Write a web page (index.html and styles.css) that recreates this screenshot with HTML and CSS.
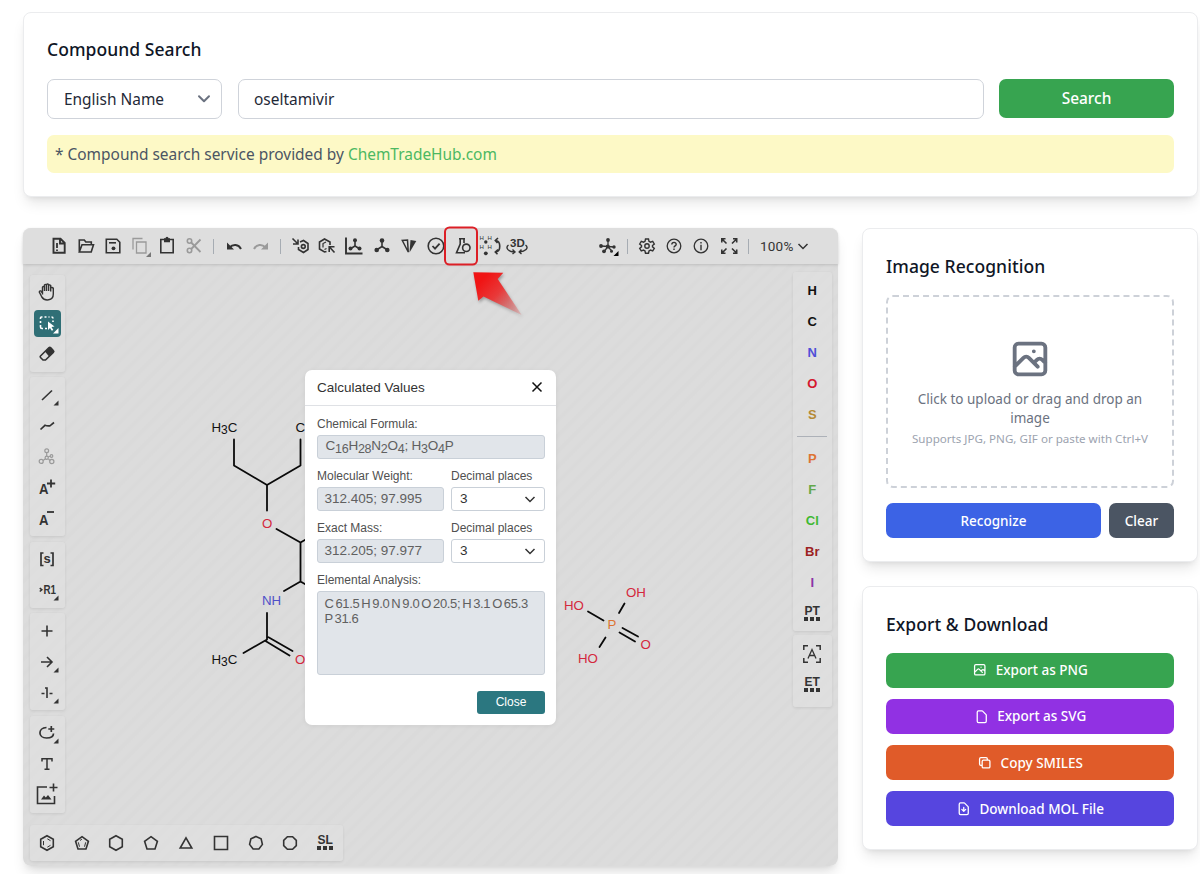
FILE: index.html
```html
<!DOCTYPE html>
<html lang="en">
<head>
<meta charset="utf-8">
<title>Compound Search</title>
<link rel="stylesheet" href="styles.css">
</head>
<body>
<main class="page">
  <section class="card search">
    <h2 class="card-title">Compound Search</h2>
    <div class="search-row">
      <div class="select"><span>English Name</span>
        <svg width="14" height="10" viewBox="0 0 14 10"><path d="M2 2.300 7 7.300 12 2.300" fill="none" stroke="#6b7280" stroke-width="2" stroke-linecap="round" stroke-linejoin="round"/></svg>
      </div>
      <div class="input">oseltamivir</div>
      <button class="btn search-btn">Search</button>
    </div>
    <p class="notice">* Compound search service provided by <a class="link">ChemTradeHub.com</a></p>
  </section>

  <div class="columns">
    <section class="editor">
      <svg class="structure" viewBox="23 228.500 815 637" width="815" height="637">
        <g class="bonds">
          <path d="M234 440V466L267 485.500L300.500 466V440M267 485.500V511M276.500 529.500L300.500 543L330 526M300.500 543V582L330 599M300.500 582L284 591.500M267 613.500V640L243.500 653.500M265.500 641.500L289.500 656M268.500 637.800L292.500 651.500"/>
          <path d="M588 612L603.500 621M619 613.500L624.500 604M605.500 638L599.500 647.500M619.500 633L635 642M622.500 628.500L638 637"/>
        </g>
        <g class="atoms">
          <text x="211.500" y="432">H<tspan dy="2.500" font-size="12">3</tspan><tspan dy="-2.500">C</tspan></text>
          <text x="295.500" y="432">CH</text>
          <text x="211.500" y="664">H<tspan dy="2.500" font-size="12">3</tspan><tspan dy="-2.500">C</tspan></text>
          <text class="nitrogen" x="262" y="605.500">NH</text>
          <text class="oxygen" x="262" y="528.500">O</text>
          <text class="oxygen" x="295" y="664">O</text>
          <text class="oxygen" x="564" y="610.500">HO</text>
          <text class="oxygen" x="626" y="597">OH</text>
          <text class="phosphorus" x="607.500" y="629.500">P</text>
          <text class="oxygen" x="640.500" y="649">O</text>
          <text class="oxygen" x="578" y="663.500">HO</text>
        </g>
      </svg>

      <header class="toolbar">
        <div class="group">
          <svg class="ico" viewBox="0 0 24 24"><path d="M6.500 4.800h7l4.200 4.200v9.700H6.500z M13 5v4.500h4.500" stroke-width="1.900"/><path d="M10 9v5M10 15.500v1.600" stroke-width="1.800"/></svg>
          <svg class="ico" viewBox="0 0 24 24"><path d="M5.300 18V6h5l1.500 2h5.500v2.500M5.300 18l2.700-7.200h11.500L17.200 18z"/></svg>
          <svg class="ico" viewBox="0 0 24 24"><path d="M5.300 5.300h10.500l3 3v10.400H5.300z"/><path d="M8 8.800h7"/><circle class="solid" cx="12.500" cy="14.300" r="1.900"/></svg>
          <svg class="ico muted" viewBox="0 0 24 24"><path d="M5 15.500V4.500h9.500M8.500 8h9.500v11H8.500z" stroke-width="1.300"/><path class="corner" d="M23 18v5h-5z"/></svg>
          <svg class="ico" viewBox="0 0 24 24"><path d="M5.800 5.500h12.400v13.200H5.800z"/><path class="solid" d="M9 4.200h1.500a1.500 1.500 0 0 1 3 0H15v4H9z"/></svg>
          <svg class="ico muted" viewBox="0 0 24 24"><circle cx="7.500" cy="7" r="2.200"/><circle cx="7.500" cy="16.500" r="2.200"/><path d="M9.200 8.500 18.500 18M9.200 15 18.500 5.500" stroke-width="1.800"/></svg>
          <i class="sep"></i>
          <svg class="ico" viewBox="0 0 24 24"><path d="M7.500 13.500C11 9.800 16.500 10 19 15" stroke-width="2"/><path class="solid" d="M5 8.500v7h7z"/></svg>
          <svg class="ico muted" viewBox="0 0 24 24"><path d="M16.500 13.500C13 9.800 7.500 10 5 15" stroke-width="2"/><path class="solid" d="M19 8.500v7h-7z"/></svg>
          <i class="sep"></i>
          <svg class="ico" viewBox="0 0 24 24"><path d="M4.500 4.500l5 5M10 5.500v4.500H5M12 8l3.500-1.500 4.500 3v6L15.500 18.500 10.500 15.500V13"/><circle cx="15.300" cy="12.500" r="1.900"/></svg>
          <svg class="ico" viewBox="0 0 24 24"><path d="M11.500 17.500 9.500 18 4.500 15V8L9.500 5 15 8v3" /><path d="M8 13.500V9.500l3-1.500M9.500 15.500l2-1" stroke-width="1.200"/><path d="M14.200 18v-5.200h5.300M14.500 13l5 5.500"/></svg>
          <svg class="ico" viewBox="0 0 24 24"><path d="M4 3.500V19.500H20.500" stroke-width="1.900"/><path d="M13 7v5l-5 3M13 12l5 3"/><g class="solid"><circle cx="13" cy="6.300" r="2"/><circle cx="8.500" cy="14.500" r="2"/><circle cx="17.500" cy="14.500" r="2"/></g></svg>
          <svg class="ico" viewBox="0 0 24 24"><path d="M12 7v5.500L6.500 16M12 12.500l5.500 3.500"/><g class="solid"><circle cx="12" cy="6.500" r="2.300"/><circle cx="6.700" cy="16" r="2.300"/><circle cx="17.300" cy="16" r="2.300"/></g></svg>
          <svg class="ico" viewBox="0 0 24 24"><path d="M11 17.500 5.300 6.500 10.500 6l.7 11.500z" stroke-width="1.500"/><path class="solid" d="M12.500 18.500 13.500 6 19.300 7z"/></svg>
          <svg class="ico" viewBox="0 0 24 24"><circle cx="12" cy="12" r="7.800"/><path d="M8.500 12l2.500 2.600 4.600-5" stroke-width="1.800"/></svg>
          <svg class="ico" viewBox="0 0 24 24"><path d="M8 4.800h6M9.200 5v5L5.500 18.700h8.500M13 5v4"/><circle cx="15.300" cy="13.800" r="3.700"/></svg>
          <svg class="ico" viewBox="0 0 24 24"><g class="tiny-h"><text x="1.500" y="6">H</text><text x="9.500" y="6">H</text><text x="1.500" y="14.500">H</text><text x="9.500" y="14.500">H</text></g><g class="solid"><circle cx="7.800" cy="8" r="1.700"/><circle cx="7.800" cy="19.300" r="1.900"/></g><path d="M18 6.500c5 1 5 10.500 0 11.500M20 4 17.300 6.500l2.200 2.500M20 15.500l-2.700 2.500 2.200 2.200"/></svg>
          <svg class="ico" viewBox="0 0 24 24"><text class="three-d" x="5" y="12.500">3D</text><path d="M3.500 11C-.5 14 4 18 9.500 18M20.500 11C24.500 14 20 17.500 14.500 18M7.500 15.500l2.500 2.500-2.500 2M16.500 15.500 14.200 18l2.300 2" stroke-width="1.400"/></svg>
        </div>
        <div class="group">
          <svg class="ico" viewBox="0 0 24 24"><path d="M5 12l7 .5 6 .5M12 6.500v6L8.500 17M12 13l4 4" stroke-width="1.300"/><g class="solid"><circle cx="5" cy="12" r="1.900"/><circle cx="12" cy="6" r="1.900"/><circle cx="11.800" cy="12.500" r="2.100"/><circle cx="18" cy="13" r="1.700"/><circle cx="8" cy="17.300" r="1.900"/><circle cx="15.500" cy="17.300" r="1.500"/></g><path class="corner dark" d="M22.500 17v5h-5z"/></svg>
          <i class="sep"></i>
          <svg class="ico" viewBox="0 0 24 24"><path d="M10.500 5h3l.5 2.300 1.500.9 2.200-.8 1.600 2.600-1.800 1.500v1.300l1.800 1.500-1.600 2.600-2.200-.8-1.500.9-.5 2.300h-3l-.5-2.300-1.500-.9-2.200.8-1.600-2.600 1.800-1.500v-1.300L4.700 10l1.600-2.600 2.200.8 1.500-.9z" stroke-width="1.400"/><circle cx="12" cy="12" r="2.200" stroke-width="1.400"/></svg>
          <svg class="ico" viewBox="0 0 24 24"><circle cx="12" cy="12" r="6.800" stroke-width="1.300"/><path d="M9.800 10.500c0-3 4.600-2.700 4.400 0-.1 1.300-2.200 1.500-2.200 3M12 14.600v1.500" stroke-width="1.400"/></svg>
          <svg class="ico" viewBox="0 0 24 24"><circle cx="12" cy="12" r="6.800" stroke-width="1.300"/><path d="M12 8v1.500M12 10.800v5.400" stroke-width="1.400"/></svg>
          <svg class="ico" viewBox="0 0 24 24"><path d="M8.500 4.800H4.800v3.700M5 5l4.500 4.500M16 4.800h3.700v3.700M19.500 5 15 9.500M4.800 15.500v3.700h3.700M5 19l4.500-4.500M19.700 15.500v3.700H16M19.500 19 15 14.500"/></svg>
          <i class="sep"></i>
          <span class="zoom">100%</span>
          <svg class="chev" viewBox="0 0 12 12"><path d="M1.500 4 6 8.500 10.500 4"/></svg>
        </div>
      </header>

      <div class="workspace">
        <aside class="left-tools">
          <div class="panel">
            <span class="tool"><svg class="ico" viewBox="0 0 24 24"><path d="M7.500 14.500V7.200q1-1.400 2 0V11 5q1-1.200 2 0v6-6.500q1-1 2.100 0V11 5.500q1-1.200 2.100 0V11.500 8q1.300-1.200 2.600.3V14c0 7-8.500 7.500-11.500 3l-2.500-5q0-1.500 1.700-1l1.700 2.500" stroke-width="1.400"/></svg></span>
            <span class="tool"><b class="selected"><svg class="ico" viewBox="0 0 24 24"><path d="M5.500 8V7q0-1 1-1h1M9.500 6h2M13.500 6h1M16.500 6q1.500 0 1.500 1.500M18 9.500v1.500M5.500 10v2M5.500 14v2q0 1.500 1.500 1.500h1M10 17.500h2"/><path class="solid" d="M13 10.500l6.500 5-3 .6 1.800 2.800-1.500.8-1.800-2.800-2 2z"/><path class="corner" d="M23.500 17v5.500h-5.500z"/></svg></b></span>
            <span class="tool"><svg class="ico" viewBox="0 0 24 24"><path d="M5.500 14 13.800 5.800q1-1 2 0l2.500 2.700q1 1 0 2L10.500 18H8l-2.500-2.500q-.7-.7 0-1.500z" stroke-width="1.600"/><path class="solid" d="M10 9.500 14.800 5 19.200 9.600 14 14.500z"/></svg></span>
          </div>
          <div class="panel">
            <span class="tool"><svg class="ico" viewBox="0 0 24 24"><path d="M7 17 17 7.500" /><path class="corner" d="M23.500 17.500v5h-5z"/></svg></span>
            <span class="tool"><svg class="ico" viewBox="0 0 24 24"><path d="M5.500 15.500 10 11.300q2 .8 5 .5L19 8.500" stroke-width="1.700"/></svg></span>
            <span class="tool"><svg class="ico muted" viewBox="0 0 24 24"><path d="M11.700 8v3.500M10.500 13.800 8 15.500M13.500 14l1.500 1.500M13 12l2-.8" stroke-width="1.200"/><g stroke-width="1.200"><circle cx="11.700" cy="5.700" r="1.900"/><circle cx="11.700" cy="12.700" r="1.600"/><circle cx="6.200" cy="16.400" r="2"/><circle cx="16.800" cy="16.500" r="2.100"/><circle cx="16.500" cy="11" r="1.300"/></g></svg></span>
            <span class="tool"><svg class="ico" viewBox="0 0 24 24"><text class="charge" x="4" y="17.500" textLength="9.500" lengthAdjust="spacingAndGlyphs">A</text><path d="M16 3.500v8M12 7.500h8.200" stroke-width="1.800"/></svg></span>
            <span class="tool"><svg class="ico" viewBox="0 0 24 24"><text class="charge" x="4" y="17.500" textLength="9.500" lengthAdjust="spacingAndGlyphs">A</text><path d="M12 5h7" stroke-width="1.800"/></svg></span>
          </div>
          <div class="panel">
            <span class="tool"><svg class="ico" viewBox="0 0 24 24"><path d="M8.500 6H6v12.500h2.500M15.500 6H18v12.500h-2.500" stroke-width="1.700"/><text class="glyph" x="8.500" y="16">s</text></svg></span>
            <span class="tool"><svg class="ico" viewBox="0 0 24 24"><path d="M4.800 10 6.800 11.800 4.800 13.500"/><text class="glyph" x="8.500" y="16.300" textLength="12.500" lengthAdjust="spacingAndGlyphs">R1</text><path class="corner" d="M23.500 17.500v5h-5z"/></svg></span>
          </div>
          <div class="panel">
            <span class="tool"><svg class="ico" viewBox="0 0 24 24"><path d="M12 6.500v11M6.500 12h11"/></svg></span>
            <span class="tool"><svg class="ico" viewBox="0 0 24 24"><path d="M6 12h10.500M12 7l5 5-5 5"/><path class="corner" d="M23.500 17.500v5h-5z"/></svg></span>
            <span class="tool"><svg class="ico" viewBox="0 0 24 24"><path d="M6.500 12.500h3M14.500 12.500h3M10 7h2v10"/><path class="corner" d="M23.500 17.500v5h-5z"/></svg></span>
          </div>
          <div class="panel">
            <span class="tool"><svg class="ico" viewBox="0 0 24 24"><path d="M11.500 6.500C2.500 7 3 17 11.500 17c5 0 7-2 7-4.500M16.300 5v6M13.300 8h6" stroke-width="1.700"/><path class="corner" d="M23.500 17.500v5h-5z"/></svg></span>
            <span class="tool"><svg class="ico" viewBox="0 0 24 24"><path d="M7 9.500V6.700h10v2.800M12 6.700v10.600M9.500 17.300h5" stroke-width="1.500"/></svg></span>
            <span class="tool"><svg class="ico" viewBox="0 0 24 24"><path d="M12 4H2.500V20.500H19.500V13M18.500.5v8M14.500 4.500h8"/><path class="solid" d="M6 16.500 9 12.500 10.800 14.500 13 12 16.500 16.500z"/></svg></span>
          </div>
        </aside>

        <aside class="right-tools">
          <div class="panel elements">
            <span class="tool el">H</span>
            <span class="tool el">C</span>
            <span class="tool el el-n">N</span>
            <span class="tool el el-o">O</span>
            <span class="tool el el-s">S</span>
            <i class="rule"></i>
            <span class="tool el el-p">P</span>
            <span class="tool el el-f">F</span>
            <span class="tool el el-cl">Cl</span>
            <span class="tool el el-br">Br</span>
            <span class="tool el el-i">I</span>
            <span class="tool"><span class="table">PT<i class="dots"></i></span></span>
          </div>
          <div class="panel">
            <span class="tool"><svg class="ico" viewBox="0 0 24 24"><path d="M3.800 8V3.800H8M16 3.800h4.200V8M3.800 16v4.200H8M16 20.200h4.200V16" stroke-width="1.500"/><path d="M8 16.500 12 7.500l4 9M9.500 13.500h5" stroke-width="1.300"/></svg></span>
            <span class="tool"><span class="table">ET<i class="dots"></i></span></span>
          </div>
        </aside>

        <footer class="panel templates">
          <span class="ring"><svg class="ico" viewBox="0 0 24 24"><path d="M12 4.700 18.300 8.300v7.400L12 19.300 5.700 15.700V8.300z"/><path d="M8.500 10v4.200M12.300 7.800l3.200 1.900M12.300 16.200l3.200-1.900" stroke-width="1"/></svg></span>
          <span class="ring"><svg class="ico" viewBox="0 0 24 24"><path d="M12 5.700 18.400 10.300 16 18H8L5.600 10.300z"/><path d="M8.300 11.300l1.200 4.400M15.700 11.300l-1.200 4.400M10 9.500l2-1.500" stroke-width="1"/></svg></span>
          <span class="ring"><svg class="ico" viewBox="0 0 24 24"><path d="M12 4.700 18.300 8.300v7.400L12 19.300 5.700 15.700V8.300z"/></svg></span>
          <span class="ring"><svg class="ico" viewBox="0 0 24 24"><path d="M12 5.700 18.400 10.300 16 18H8L5.600 10.300z"/></svg></span>
          <span class="ring"><svg class="ico" viewBox="0 0 24 24"><path d="M12 6.800 17.800 17H6.200z"/></svg></span>
          <span class="ring"><svg class="ico" viewBox="0 0 24 24"><path d="M5.500 5.500h13v13h-13z"/></svg></span>
          <span class="ring"><svg class="ico" viewBox="0 0 24 24"><path d="M12 5.500 17.100 7.900 18.400 13.400 14.900 18H9.100L5.600 13.400 6.900 7.900z"/></svg></span>
          <span class="ring"><svg class="ico" viewBox="0 0 24 24"><path d="M9.400 5.700h5.200L18.300 9.400v5.200L14.600 18.300H9.400L5.700 14.600V9.400z"/></svg></span>
          <span class="ring"><span class="table">SL<i class="dots"></i></span></span>
        </footer>
      </div>

      <div class="dialog">
        <div class="dialog-head"><span>Calculated Values</span>
          <svg width="12" height="12" viewBox="0 0 12 12"><path d="M1.500 1.500l9 9M10.500 1.500l-9 9" stroke="#111" stroke-width="1.500"/></svg>
        </div>
        <div class="dialog-body">
          <div class="field"><label>Chemical Formula:</label>
            <div class="value formula">C<sub>16</sub>H<sub>28</sub>N<sub>2</sub>O<sub>4</sub>; H<sub>3</sub>O<sub>4</sub>P</div></div>
          <div class="pair">
            <div class="field"><label>Molecular Weight:</label><div class="value">312.405; 97.995</div></div>
            <div class="field"><label>Decimal places</label><div class="value picker">3<svg class="chev" viewBox="0 0 12 12"><path d="M1.500 4 6 8.500 10.500 4"/></svg></div></div>
          </div>
          <div class="pair">
            <div class="field"><label>Exact Mass:</label><div class="value">312.205; 97.977</div></div>
            <div class="field"><label>Decimal places</label><div class="value picker">3<svg class="chev" viewBox="0 0 12 12"><path d="M1.500 4 6 8.500 10.500 4"/></svg></div></div>
          </div>
          <div class="field"><label>Elemental Analysis:</label>
            <div class="value analysis">C 61.5 H 9.0 N 9.0 O 20.5; H 3.1 O 65.3<br>P 31.6</div></div>
          <button class="close-btn">Close</button>
        </div>
      </div>

      <svg class="callout" viewBox="440 222 90 100" width="90" height="100">
        <defs><linearGradient id="fade" gradientUnits="userSpaceOnUse" x1="482" y1="280" x2="521" y2="316"><stop offset="0" stop-color="#f01414"/><stop offset=".4" stop-color="#e83a3a"/><stop offset="1" stop-color="#e87070" stop-opacity=".25"/></linearGradient></defs>
        <rect x="445" y="227.500" width="32" height="37" rx="4.500" fill="none" stroke="#dc1f26" stroke-width="2"/>
        <path class="arrow" d="M473.300 272.300 503.300 272.700 497.700 279 521.700 315 483.500 296.500 478.300 300.700z" fill="url(#fade)"/>
      </svg>
    </section>

    <div class="side">
      <section class="card">
        <h2 class="card-title">Image Recognition</h2>
        <div class="drop">
          <svg width="46" height="46" viewBox="0 0 24 24" fill="none" stroke="#6b7280" stroke-width="2" stroke-linecap="round" stroke-linejoin="round"><path d="M4 16l4.586-4.586a2 2 0 012.828 0L16 16m-2-2l1.586-1.586a2 2 0 012.828 0L20 14m-6-6h.01M6 20h12a2 2 0 002-2V6a2 2 0 00-2-2H6a2 2 0 00-2 2v12a2 2 0 002 2z"/></svg>
          <p class="drop-text">Click to upload or drag and drop an<br>image</p>
          <p class="drop-hint">Supports JPG, PNG, GIF or paste with Ctrl+V</p>
        </div>
        <div class="actions">
          <button class="btn blue">Recognize</button>
          <button class="btn gray">Clear</button>
        </div>
      </section>
      <section class="card">
        <h2 class="card-title">Export &amp; Download</h2>
        <div class="exports">
          <button class="btn green"><svg class="bi" viewBox="0 0 24 24"><path d="M4 16l4.586-4.586a2 2 0 012.828 0L16 16m-2-2l1.586-1.586a2 2 0 012.828 0L20 14m-6-6h.01M6 20h12a2 2 0 002-2V6a2 2 0 00-2-2H6a2 2 0 00-2 2v12a2 2 0 002 2z"/></svg>Export as PNG</button>
          <button class="btn purple"><svg class="bi" viewBox="0 0 24 24"><path d="M7 21h10a2 2 0 002-2V9.414a1 1 0 00-.293-.707l-5.414-5.414A1 1 0 0012.586 3H7a2 2 0 00-2 2v14a2 2 0 002 2z"/></svg>Export as SVG</button>
          <button class="btn orange"><svg class="bi" viewBox="0 0 24 24"><path d="M8 16H6a2 2 0 01-2-2V6a2 2 0 012-2h8a2 2 0 012 2v2m-6 12h8a2 2 0 002-2v-8a2 2 0 00-2-2h-8a2 2 0 00-2 2v8a2 2 0 002 2z"/></svg>Copy SMILES</button>
          <button class="btn indigo"><svg class="bi" viewBox="0 0 24 24"><path d="M12 10v6m0 0l-3-3m3 3l3-3m2 8H7a2 2 0 01-2-2V5a2 2 0 012-2h5.586a1 1 0 01.707.293l5.414 5.414a1 1 0 01.293.707V19a2 2 0 01-2 2z"/></svg>Download MOL File</button>
        </div>
      </section>
    </div>
  </div>
</main>
</body>
</html>
```
FILE: styles.css
```css
* { box-sizing: border-box; }
html, body { height: 874px; overflow: hidden; }
body { margin: 0; background: #fff; color: #0f1626; font-family: "Noto Sans", sans-serif; }
button { border: 0; font-family: inherit; }
p, h2 { margin: 0; }
i { font-style: normal; }

.page { width: 1198px; padding: 12px 0 0 23px; }
.card {
  padding: 23px; background: #fff; border: 1px solid #ebecee; border-radius: 8px;
  box-shadow: 0 9px 14px -3px rgba(0,0,0,.1), 0 4px 6px -4px rgba(0,0,0,.1);
}
.card-title { height: 27px; line-height: 27px; margin-bottom: 15.5px; font-size: 17.5px; font-weight: 500; letter-spacing: .06px; white-space: nowrap; }

.search { height: 184.5px; }
.search-row { display: grid; grid-template-columns: 175px 1fr 175px; gap: 15.5px; height: 40px; }
.select, .input { display: flex; align-items: center; border: 1px solid #cfd3da; border-radius: 7px; padding: 0 16px; font-size: 15.45px; color: #1f2937; }
.select { justify-content: space-between; padding-right: 10px; }
.input { padding-left: 15.5px; }
.btn { display: flex; align-items: center; justify-content: center; border-radius: 7px; color: #fff; font-size: 13.5px; font-weight: 500; white-space: nowrap; }
.search-btn { height: 39px; background: #37a450; font-size: 15.45px; }
.notice { height: 38px; line-height: 38px; margin-top: 16px; padding: 0 8px; border-radius: 7px; background: #fdf9c6; color: #4b5563; font-size: 15.45px; }
.link { color: #4cb862; }

.columns { display: grid; grid-template-columns: 815px 336px; gap: 24px; margin-top: 31.5px; }

.editor {
  position: relative; height: 638px; display: flex; flex-direction: column; border-radius: 8px;
  background: repeating-linear-gradient(135deg, #dcdcdc 0 5px, #dadada 7px 9px, #dcdcdc 11px);
  box-shadow: 0 9px 14px -3px rgba(0,0,0,.12), 0 4px 6px -4px rgba(0,0,0,.1);
  font-family: "Liberation Sans", Arial, sans-serif;
}
.structure { position: absolute; left: 0; top: 0; }
.bonds { fill: none; stroke: #0a0a0a; stroke-width: 1.8; stroke-linecap: round; stroke-linejoin: round; }
.atoms { font-size: 13.3px; fill: #111; }
.atoms .oxygen { fill: #d4283c; }
.atoms .nitrogen { fill: #4f50c8; }
.atoms .phosphorus { fill: #dd7433; }

.toolbar { position: relative; height: 36px; flex: none; display: flex; align-items: center; justify-content: space-between; padding: 0 29.5px 0 22px; border-radius: 8px 8px 0 0; background: rgba(223,223,223,.75); box-shadow: 0 1px 3px rgba(0,0,0,.14); }
.group { display: flex; align-items: center; }
.ico { width: 24px; height: 24px; margin: 0 1.55px; flex: none; overflow: visible; fill: none; stroke: #333; stroke-width: 1.6; }
.ico text { fill: #333; stroke: none; }
.solid, .corner { fill: #333; stroke: none; }
.muted { stroke: #9a9a9a; }
.muted .solid { fill: #9a9a9a; }
.muted .corner { fill: #777; }
.corner.dark { fill: #000; }
.tiny-h { font-size: 6px; }
.three-d { font-size: 11.5px; font-weight: 700; }
.charge { font-size: 14.5px; font-weight: 700; }
.glyph { font-size: 13px; font-weight: 700; }
.sep { width: 12.5px; height: 15px; background: linear-gradient(#a6acb3, #a6acb3) center / 1px 100% no-repeat; }
.zoom { margin-left: 5.5px; font: 13.5px/16px Roboto, sans-serif; letter-spacing: .2px; color: #333; }
.chev { width: 12px; height: 12px; margin-left: 3px; fill: none; stroke: #333; stroke-width: 1.5; }

.workspace { position: relative; flex: 1; display: grid; grid-template-columns: 35px 39.5px; grid-template-rows: 550.5px 36px; justify-content: space-between; padding: 10.5px 6px 5px 6.500px; }
.panel { border-radius: 3px; background: rgba(223,223,223,.7); box-shadow: 0 1px 3px rgba(0,0,0,.09); }
.left-tools, .right-tools { display: flex; flex-direction: column; gap: 5.5px; }
.left-tools .panel { padding: 2px 0; }
.tool { display: flex; align-items: center; justify-content: center; height: 31px; }
.selected { display: flex; align-items: center; justify-content: center; width: 27px; height: 27px; border-radius: 4px; background: #306f76; }
.selected .ico { stroke: #fff; }
.selected .solid, .selected .corner { fill: #fff; }
.right-tools { gap: 3.5px; margin-top: -2.5px; }
.right-tools .tool { height: 30.9px; }
.right-tools .panel { padding: 3.5px 0 2.5px; }
.right-tools .panel + .panel { padding: 3.5px 0 7px; }
.el { font-size: 13px; font-weight: 700; color: #111; }
.el-n { color: #4f50d8; } .el-o { color: #d4182f; } .el-s { color: #b58a35; }
.el-p { color: #dd7433; } .el-f { color: #63a84a; } .el-cl { color: #3fb932; } .el-br { color: #9c2222; } .el-i { color: #8c32a8; }
.rule { display: block; width: 30px; height: 1.5px; margin: 6px auto; background: #adb1b8; }
.table { display: flex; flex-direction: column; align-items: center; font-size: 12px; line-height: 11px; font-weight: 700; color: #333; }
.dots { width: 16px; height: 4px; background: repeating-linear-gradient(90deg, #333 0 4px, transparent 4px 6px); }
.templates { grid-column: 1 / 3; width: 313px; height: 35.5px; display: flex; align-items: center; }
.ring { width: 34.8px; display: flex; justify-content: center; }

.dialog { position: absolute; left: 282px; top: 142px; width: 251px; height: 355px; border-radius: 7px; background: #fff; color: #333; box-shadow: 0 1px 5px rgba(0,0,0,.06); }
.dialog-head { display: flex; align-items: center; justify-content: space-between; height: 35.5px; padding: 0 13.5px 0 12px; border-bottom: 1px solid #dfe1e5; font-size: 13.5px; }
.dialog-body { display: flex; flex-direction: column; gap: 6px; padding: 8.5px 11px 0 12px; }
.field { display: flex; flex-direction: column; }
label { height: 20px; line-height: 20px; font-size: 12px; color: #505050; white-space: nowrap; }
.value { height: 23.5px; line-height: 21px; margin-top: 1px; padding: 0 6.5px; border: 1px solid #c9d0d8; border-radius: 3px; background: #e1e5ea; color: #606060; font-size: 13.5px; white-space: nowrap; }
.field:first-child > .formula { padding-left: 7.5px; }
.formula sub { font-size: 12.5px; line-height: 0; vertical-align: -3px; }
.formula { letter-spacing: -.25px; line-height: 20px; }
.dialog-body > .field, .pair { margin-bottom: 1.5px; }
.pair { display: grid; grid-template-columns: 126.5px 1fr; gap: 7.5px; }
.picker { display: flex; align-items: center; justify-content: space-between; background: #fff; color: #333; padding: 0 8px; }
.analysis { height: 84px; padding-top: 3.5px; line-height: 15.5px; font-size: 13px; letter-spacing: -.32px; word-spacing: -1.4px; }
.close-btn { align-self: flex-end; width: 68px; height: 23.5px; margin-top: 8px; padding: 0; border-radius: 3px; background: #2b7780; color: #fff; font-size: 12px; }

.callout { position: absolute; left: 417px; top: -6px; }
.arrow { filter: drop-shadow(1px 2px 1.5px rgba(0,0,0,.3)); }

.side { display: flex; flex-direction: column; gap: 23.5px; }
.side .card { padding-top: 24px; }
.side .card-title { margin-bottom: 15px; }
.drop { display: flex; flex-direction: column; align-items: center; height: 193px; padding-top: 38.5px; border: 2px dashed #cdd1d8; border-radius: 7px; text-align: center; }
.drop-text { margin-top: 8px; font-size: 13.5px; line-height: 19.3px; color: #6b7280; }
.drop-hint { margin-top: 3px; font-size: 11.6px; line-height: 16px; color: #9ca3af; }
.actions { display: grid; grid-template-columns: 1fr 65px; gap: 8px; margin-top: 15px; }
.actions .btn, .exports .btn { height: 35px; padding: 0; }
.exports { display: flex; flex-direction: column; gap: 11.3px; }
.bi { width: 15.5px; height: 15.5px; margin-right: 8px; fill: none; stroke: #fff; stroke-width: 2; stroke-linecap: round; stroke-linejoin: round; }
.blue { background: #3c63e5; }
.gray { background: #4b5563; }
.green { background: #37a450; }
.purple { background: #9131e3; }
.orange { background: #e05b29; }
.indigo { background: #5645df; }
```
